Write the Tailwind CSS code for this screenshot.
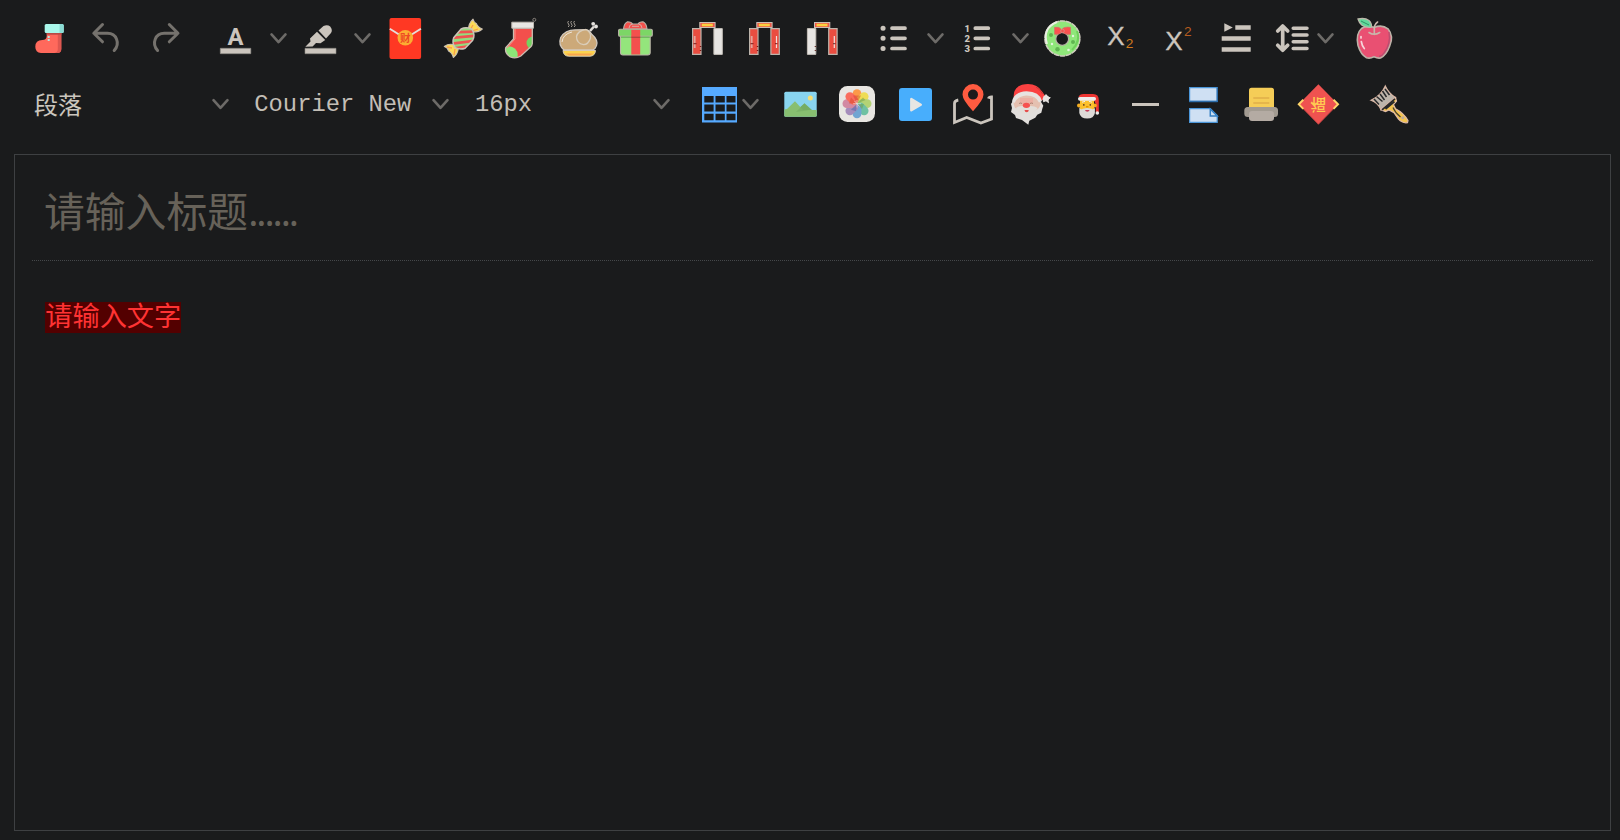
<!DOCTYPE html>
<html lang="zh">
<head>
<meta charset="utf-8">
<title>Editor</title>
<script src="https://cdn.jsdelivr.net/npm/@tailwindcss/browser@4"></script>
</head>
<body class="w-[1620px] h-[840px] overflow-hidden bg-[#1a1b1c] text-[#cbc6be] flex flex-col font-['Noto_Sans_CJK_SC',sans-serif]">
<svg class="hidden"><defs>
<path id="chev" d="M-7 -4.1 0 3.6 7 -4.1" fill="none" stroke="#6d6b68" stroke-width="2.6" stroke-linecap="round" stroke-linejoin="round"/>
<g id="pillar"><path d="M.4.4h8.4v25.8H.4z" fill="#ea4d40" stroke="#bcb4ab" stroke-width="1.2"/></g>
<g id="blank"><path d="M.4.4h8.4v25.8H.4z" fill="#e7e5e2" stroke="#c5c0b9" stroke-width="1"/></g>
<g id="plaque"><rect x=".5" y=".5" width="15.3" height="5" fill="#ed5749" stroke="#c9bfb4"/><path d="M2.500 1.700h11v2.600h-11z" fill="#fad13f"/></g>
</defs></svg>

<!-- toolbar, first row -->
<div class="flex h-[64px] mt-[6px] pl-[20px] shrink-0">
<svg class="w-[58px] h-[64px] shrink-0" viewBox="20 6 58 64"><path d="M46.7 32h14.6v17q0 4-4 4H41q-5.700-.3-5.700-6.200 0-6.800 7-6.800 4.400 0 4.400-4z" fill="#ff695c"/><path d="M57.800 33h3.500v16q0 4-4 4h-3q3.500-.5 3.500-4z" fill="#de5750"/><path d="M46.700 33h14.600v1.700H46.700z" fill="#b94a45"/><rect x="44.700" y="24" width="19" height="9" rx="1.500" fill="#a9f7ea"/><path d="M59.500 24h2.700q1.500 0 1.500 1.500v6q0 1.500-1.500 1.500h-2.700z" fill="#8bdcd4"/><path d="M47.700 36h2v2h-2zM47.700 39h2v2h-2z" fill="#b7e9e2"/></svg>
<svg class="w-[58px] h-[64px] shrink-0" viewBox="78 6 58 64" fill="none" stroke="#75726d" stroke-width="3" stroke-linecap="round" stroke-linejoin="round"><path d="M102.500 24.500 93.800 33.300 102.500 41.800M94 33.300h13.500c9 0 13 10 6.700 17.200"/></svg>
<svg class="w-[58px] h-[64px] shrink-0" viewBox="136 6 58 64" fill="none" stroke="#75726d" stroke-width="3" stroke-linecap="round" stroke-linejoin="round"><path d="M169.300 24.500 178 33.300 169.300 41.800M177.800 33.300h-13.500c-9 0-13 10-6.700 17.200"/></svg>
<svg class="w-[54px] h-[64px] shrink-0 ml-[14px]" viewBox="208 6 54 64" fill="#cbc5bd"><text x="227.500" y="45.200" font-size="24" font-weight="700" textLength="16" lengthAdjust="spacingAndGlyphs" font-family="Roboto,sans-serif">A</text><path d="M220.300 48.300h30.500v5.400h-30.500z" stroke="#918d88" stroke-width=".6"/></svg>
<svg class="w-[30px] h-[64px] shrink-0" viewBox="262 6 30 64"><use href="#chev" x="278.500" y="38.500"/></svg>
<svg class="w-[54px] h-[64px] shrink-0" viewBox="292 6 54 64" fill="#cbc5bd"><path d="M305.300 46.700l5.200-5.200-.5-3 7-6.800 8.200 8.200-4.700 3.400-4.500-.3-3.400 3.400z"/><path d="M318.500 30.500l5-4.600q4-1.700 6.700.6 2.800 3.500.8 6.500l-5 5.500z"/><path d="M305 48.300h31v5.400h-31z" stroke="#918d88" stroke-width=".6"/></svg>
<svg class="w-[30px] h-[64px] shrink-0" viewBox="346 6 30 64"><use href="#chev" x="362.500" y="38.500"/></svg>
<svg class="w-[58px] h-[64px] shrink-0" viewBox="376 6 58 64"><rect x="389.500" y="18" width="31.600" height="41" rx="2" fill="#ff3823"/><path d="M389.800 28.700 399 34.500M420.900 28.700 411.700 34.500" stroke="#e6ded9" stroke-width="1.900"/><circle cx="405.300" cy="37.700" r="7.800" fill="#fcad32"/><text x="405.300" y="41.500" font-size="10.500" font-weight="700" text-anchor="middle" fill="#ee4a24">财</text></svg>
<svg class="w-[58px] h-[64px] shrink-0" viewBox="434 6 58 64"><g stroke="#cbc0b2" stroke-width="1.100" stroke-linejoin="round"><path d="M468.500 29.500q0-6 4.500-10.300 1 3.500 3.300 4.300 1.200 3.500 6 5.500-4 3.500-10.500 3z" fill="#fcda57"/><path d="M456 45.500q-6.500-3-11.700 1 3.500 1 4.200 4.500 3.700 1.700 4.800 6.500 4.500-3.500 5-9z" fill="#fcda57"/></g><path d="M470 30l3-5M472 31l6-2M452 48l-5-1M455 49l-1 6" stroke="#f69e4d" stroke-width="1.300"/><clipPath id="cd"><path d="M461 29q5-2.500 11 .2 3.500 6 .7 11l-7.500 8q-5 2-10-.5-3.500-5-1.500-10z"/></clipPath><g clip-path="url(#cd)"><path d="M450 24h26v26h-26z" fill="#93dd7d"/><path d="M450 32.500l28-1M450 38l28-2.500M450 43.800l28-3.500M450 49l28-4" stroke="#ef5350" stroke-width="2.800"/></g><path d="M461 29q5-2.500 11 .2 3.500 6 .7 11l-7.500 8q-5 2-10-.5-3.500-5-1.500-10z" fill="none" stroke="#ccc3b9" stroke-width="1.500"/></svg>
<svg class="w-[58px] h-[64px] shrink-0" viewBox="492 6 58 64"><circle cx="534.300" cy="19.800" r="1.500" fill="none" stroke="#928b84" stroke-width=".9"/><clipPath id="sk"><path d="M513.500 28h18.800v15.500q-.2 2-1.500 3.300l-10 9.200q-5 3-10.500 1-6-4-4.500-9.500l7.700-8.500z"/></clipPath><g clip-path="url(#sk)"><path d="M500 25h40v40h-40z" fill="#f34f4c"/><circle cx="509" cy="55" r="8.700" fill="#8ce778"/><circle cx="533" cy="43" r="6.500" fill="#74d260"/><path d="M515 28v11l-8 9" stroke="#ff8b82" stroke-width="1" fill="none"/></g><path d="M513.500 28h18.800v15.500q-.2 2-1.500 3.300l-10 9.200q-5 3-10.500 1-6-4-4.500-9.500l7.700-8.500z" fill="none" stroke="#c9bdb1" stroke-width="1.300"/><path d="M511.800 22.200h21.700v6h-21.700z" fill="#e8e6e3" stroke="#bcb6ae"/></svg>
<svg class="w-[57px] h-[64px] shrink-0" viewBox="550 6 57 64"><path d="M568.500 21q-1.500 1.500 0 3t-.3 3M571.500 21q-1.500 1.500 0 3t-.3 3M574.500 21q-1.500 1.500 0 3t-.3 3" fill="none" stroke="#a29b93"/><path d="M590 31l4-4.500" stroke="#dedad5" stroke-width="2.600"/><circle cx="593.200" cy="23.800" r="1.900" fill="#e5e2de"/><circle cx="596" cy="26.500" r="1.900" fill="#e5e2de"/><path d="M564 50q-6-5-3.300-12.500 4.500-8 15.300-7.700l10-.2q3.500.5 5.500 4.500 7 6 5 11.500-1 3-3.500 4.400z" fill="#cca979" stroke="#d1c9bf" stroke-width="1.300"/><path d="M562 42q1-8 10-10" stroke="#eee5d9" stroke-width="1" fill="none"/><path d="M586 29.500q5.500 3 4.500 8.500-2 6.500-7 6.700-7-1.500-7-8 1-6 9.500-7.200" fill="#cca979" stroke="#dacdb9" stroke-width="1.300"/><path d="M563 50.500h32.500q-.5 5.500-5.500 5.700h-21.500q-5-.2-5.500-5.700z" fill="#fbd34f" stroke="#d8cbb9"/><path d="M566 53.500h27l-3 2h-21z" fill="#f9a650"/></svg>
<svg class="w-[58px] h-[64px] shrink-0" viewBox="607 6 58 64"><g stroke="#b9b3a7" stroke-width="1.100"><path d="M623.500 29q.5-5.500 4-7.200 4 0 5 2.200h5.500q1-2.200 5-2.200 3.500 1.700 4 7.200z" fill="#f3504c"/><rect x="620.500" y="35" width="29.700" height="20" rx="2.500" fill="#94e57c"/><rect x="618.600" y="29.300" width="33.700" height="7" rx="1.300" fill="#7cd666"/></g><path d="M621 37.200h28.800" stroke="#68b65a" stroke-width="1.300"/><path d="M631.300 29.900h8.900v24.600h-8.900z" fill="#f4504d"/><path d="M631.300 37.300h8.900" stroke="#b6433f" stroke-width="1.300"/><path d="M629 28q.5-4 3.500-4M642 28q-.5-4-3.500-4M632 26.300h7" fill="none" stroke="#d6b7ae" stroke-width=".9"/></svg>
<svg class="w-[58px] h-[64px] shrink-0 ml-[13px]" viewBox="678 6 58 64"><use href="#pillar" x="692.200" y="28.200"/><use href="#blank" x="713.500" y="28.200"/><use href="#plaque" x="699.300" y="22"/><path d="M694.700 36v12" stroke="#e5a49c" stroke-width="1.800"/><path d="M693.500 43.700h3M699.800 46.500h1.500M699.800 50.500h1.500" stroke="#7b1b18" stroke-width="1"/></svg>
<svg class="w-[58px] h-[64px] shrink-0" viewBox="736 6 58 64"><use href="#pillar" x="749.200" y="28.200"/><use href="#pillar" x="770.500" y="28.200"/><use href="#plaque" x="756.300" y="22"/><path d="M751.700 36v12" stroke="#e5a49c" stroke-width="1.800"/><path d="M776.500 36v12" stroke="#f1dfdc" stroke-width="1.200"/><path d="M750.500 43.700h3M756.800 46.500h1.500M756.800 50.500h1.500M775 43.700h2.500" stroke="#7b1b18" stroke-width="1"/></svg>
<svg class="w-[58px] h-[64px] shrink-0" viewBox="794 6 58 64"><use href="#blank" x="807" y="28.200"/><use href="#pillar" x="828.300" y="28.200"/><use href="#plaque" x="814" y="22"/><path d="M834.300 36v12" stroke="#f1dfdc" stroke-width="1.200"/><path d="M814.700 46.500h1.500M814.700 50.500h1.500M833 43.700h2.500" stroke="#64302c" stroke-width="1"/></svg>
<svg class="w-[54px] h-[64px] shrink-0 ml-[14px]" viewBox="866 6 54 64"><path d="M883 28.200h.1M883 38.300h.1M883 48.500h.1" stroke="#cbc5bd" stroke-width="5" stroke-linecap="round"/><path d="M892 28.200h13M892 38.300h13M892 48.500h13" stroke="#cbc5bd" stroke-width="3.700" stroke-linecap="round"/></svg>
<svg class="w-[30px] h-[64px] shrink-0" viewBox="920 6 30 64"><use href="#chev" x="935.500" y="38.500"/></svg>
<svg class="w-[56px] h-[64px] shrink-0" viewBox="950 6 56 64"><g fill="#cbc5bd" font-family="Roboto,sans-serif" font-weight="900" font-size="9.500" text-anchor="middle"><text x="967.200" y="31.700">1</text><text x="967.200" y="41.900">2</text><text x="967.200" y="52">3</text></g><path d="M975.300 28.200h13M975.300 38.300h13M975.300 48.500h13" stroke="#cbc5bd" stroke-width="3.700" stroke-linecap="round"/></svg>
<svg class="w-[28px] h-[64px] shrink-0" viewBox="1006 6 28 64"><use href="#chev" x="1020.500" y="38.500"/></svg>
<svg class="w-[58px] h-[64px] shrink-0" viewBox="1034 6 58 64"><circle cx="1062.400" cy="38.400" r="11.900" fill="none" stroke="#8fe77a" stroke-width="11.500"/><circle cx="1062.400" cy="38.400" r="17.500" fill="none" stroke="#d1ccc0" stroke-width="1.500" stroke-dasharray="5.500 .6"/><path d="M1047 44q-5-16 10-22" fill="none" stroke="#e9eee1" stroke-width="2"/><path d="M1077 31q4 10-5 19" fill="none" stroke="#6fd05b" stroke-width="2"/><circle cx="1062.200" cy="38.900" r="6.400" fill="#1a1b1c" stroke="#b8b3a7" stroke-width="1.200"/><g fill="#60b551"><circle cx="1051" cy="35" r="2"/><circle cx="1057.500" cy="49.300" r="2.200"/><circle cx="1073" cy="42" r="2"/></g><g fill="#e3f4dc"><circle cx="1052" cy="44" r="1.200"/><circle cx="1068.500" cy="50" r="1.300"/><circle cx="1073" cy="36" r="1.200"/></g><path d="M1054.500 27.300q4.500-1 7 2.200 3-3.200 9-2.200v7q-5.500.5-8.500-2-2.500 2.500-7.500 2z" fill="#fa524f" stroke="#cf746a" stroke-width=".7"/><circle cx="1062.500" cy="31" r="1.800" fill="#f3534e" stroke="#d39e91" stroke-width=".7"/></svg>
<svg class="w-[58px] h-[64px] shrink-0" viewBox="1092 6 58 64"><text x="1107.300" y="45.300" font-family="Liberation Sans,sans-serif" font-size="25" fill="#cbc5bd" stroke="#cbc5bd" stroke-width=".3" textLength="17.400" lengthAdjust="spacingAndGlyphs">X</text><text x="1125.700" y="48" font-family="Liberation Sans,sans-serif" font-size="13.700" fill="#d1791e">2</text></svg>
<svg class="w-[58px] h-[64px] shrink-0" viewBox="1150 6 58 64"><text x="1165.300" y="50.300" font-family="Liberation Sans,sans-serif" font-size="25" fill="#cbc5bd" stroke="#cbc5bd" stroke-width=".3" textLength="17.400" lengthAdjust="spacingAndGlyphs">X</text><text x="1183.900" y="36" font-family="Liberation Sans,sans-serif" font-size="13.700" fill="#b65c1f">2</text></svg>
<svg class="w-[58px] h-[64px] shrink-0" viewBox="1208 6 58 64" fill="#cbc5bd"><path d="M1224.300 23.200v8.600l8.500-4.300zM1235.300 25.200h15.400v4.600h-15.400zM1221.700 36.200h29v4.600h-29zM1221.700 47.200h29v4.600h-29z"/></svg>
<svg class="w-[46px] h-[64px] shrink-0" viewBox="1266 6 46 64" fill="none" stroke="#cbc5bd" stroke-linecap="round" stroke-linejoin="round"><path d="M1277.700 31l5-5 5 5M1277.700 45.200l5 5 5-5M1282.700 27v22" stroke-width="3.700"/><path d="M1293.200 28.200h13.800M1293.200 34.900h13.800M1293.200 41.700h13.800M1293.200 48.500h13.800" stroke-width="3.500"/></svg>
<svg class="w-[28px] h-[64px] shrink-0" viewBox="1312 6 28 64"><use href="#chev" x="1325.500" y="38.500"/></svg>
<svg class="w-[58px] h-[64px] shrink-0 ml-[5px]" viewBox="1345 6 58 64"><path d="M1374 27.500q8-3.300 14 1.300 6 7.500 1.700 17.200-3.500 9.500-9.200 12-3 .5-6.500-1.200-4 2-7.500.9-5.700-3-8.500-12.200-2.500-11.500 3.500-17 5.500-4 12.500-1z" fill="#e95072" stroke="#bcb2a7" stroke-width="1.600"/><path d="M1389 32q2 12-5 21-2 3-5 3.500" fill="none" stroke="#b64f70" stroke-width="1.300"/><path d="M1361.300 41.500q.7 4.500 3 7M1361 36.500v1.500" stroke="#f6d6db" stroke-width="1.700" fill="none" stroke-linecap="round"/><path d="M1369 32.500q5 3.500 10.700 0M1374.300 34.500v-8q1-3 3.300-4.500" fill="none" stroke="#c9b6aa" stroke-width="1.600" stroke-linecap="round"/><path d="M1358 19q7-1.500 11 1.500 2.800 2.500 2.500 6.700-5.500.7-9.500-2-3-2.500-4-6.200z" fill="#61da9b" stroke="#bcb8aa" stroke-width="1.300"/><path d="M1361 21l8 4" stroke="#2a8b62" stroke-width=".9"/></svg>
</div>

<!-- toolbar, second row -->
<div class="flex h-[64px] mt-[2px] shrink-0">
<div class="flex w-[208px] pl-[34px] h-[64px] items-center text-[24px] leading-[64px]">段落</div>
<svg class="w-[28px] h-[64px] shrink-0" viewBox="208 72 28 64"><use href="#chev" x="220.500" y="104.300"/></svg>
<svg class="w-[192px] h-[64px] shrink-0" viewBox="236 72 192 64"><text x="254.300" y="111" font-size="23.800" font-family="Courier New,Liberation Mono,monospace" fill="#c3beb6">Courier New</text></svg>
<svg class="w-[28px] h-[64px] shrink-0" viewBox="428 72 28 64"><use href="#chev" x="440.500" y="104.300"/></svg>
<svg class="w-[192px] h-[64px] shrink-0" viewBox="456 72 192 64"><text x="475" y="111" font-size="23.800" font-family="Courier New,Liberation Mono,monospace" fill="#c3beb6">16px</text></svg>
<svg class="w-[30px] h-[64px] shrink-0" viewBox="648 72 30 64"><use href="#chev" x="661.500" y="104.300"/></svg>
<svg class="w-[60px] h-[64px] shrink-0 ml-[12px]" viewBox="690 72 60 64" overflow="visible"><path d="M702 87h35v35.500h-35z" fill="#56aaff"/><path d="M704.300 96h9.300v6.500h-9.300zM715.500 96h9.300v6.500h-9.300zM726.500 96h9v6.500h-9zM704.300 104.500h9.300v7h-9.300zM715.500 104.500h9.300v7h-9.300zM726.500 104.500h9v7h-9zM704.300 113.800h9.300v6.500h-9.300zM715.500 113.800h9.300v6.500h-9.300zM726.500 113.800h9v6.500h-9z" fill="#1a1b1c"/><use href="#chev" x="750.500" y="104.300"/></svg>
<svg class="w-[58px] h-[64px] shrink-0 ml-[21px]" viewBox="771 72 58 64"><clipPath id="pic"><rect x="784.300" y="91.800" width="32.400" height="25" rx="1.500"/></clipPath><g clip-path="url(#pic)"><path d="M784 91h33v27h-33z" fill="#88d4ef"/><path d="M797 110l7.500-6.700L812 110v3h-15z" fill="#76ae67"/><path d="M784 109.500l3-.5 8-7.700 8 8.700h14v8h-33z" fill="#88bf70"/><path d="M796 112l8.500-8.500L810 110z" fill="#75ab63" opacity=".6"/></g><circle cx="810.300" cy="98" r="2.500" fill="#f7df73"/></svg>
<svg class="w-[58px] h-[64px] shrink-0" viewBox="829 72 58 64"><rect x="839" y="86" width="36" height="36" rx="8.500" fill="#e8e6e2"/><g opacity=".9"><rect x="852.600" y="89.200" width="8.800" height="14.300" rx="4.400" fill="#ff9138"/><g transform="rotate(45 857 103.700)"><rect x="852.600" y="89.200" width="8.800" height="14.300" rx="4.400" fill="#efdc45"/></g><g transform="rotate(90 857 103.700)"><rect x="852.600" y="89.200" width="8.800" height="14.300" rx="4.400" fill="#aed16a"/></g><g transform="rotate(135 857 103.700)"><rect x="852.600" y="89.200" width="8.800" height="14.300" rx="4.400" fill="#62bd9c"/></g><g transform="rotate(180 857 103.700)"><rect x="852.600" y="89.200" width="8.800" height="14.300" rx="4.400" fill="#659ed1"/></g><g transform="rotate(225 857 103.700)"><rect x="852.600" y="89.200" width="8.800" height="14.300" rx="4.400" fill="#9e83b7"/></g><g transform="rotate(270 857 103.700)"><rect x="852.600" y="89.200" width="8.800" height="14.300" rx="4.400" fill="#d0809d"/></g><g transform="rotate(315 857 103.700)"><rect x="852.600" y="89.200" width="8.800" height="14.300" rx="4.400" fill="#fb604f"/></g></g><path d="M853 95.500l4 8 4-8M849 103.500h8l-6-6" fill="#d8452c" opacity=".5"/><path d="M863 97.500l-6 6 8.500-3.500M857 103.700l7 .3-2 5z" fill="#6d9b45" opacity=".5"/><path d="M857 103.700l-6 6 5 1.500z" fill="#4e5fa5" opacity=".5"/><path d="M857 100v7.500M853.200 103.700h7.600M854.500 101l5 5.500" stroke="#eee" stroke-width=".6"/></svg>
<svg class="w-[57px] h-[64px] shrink-0" viewBox="887 72 57 64"><rect x="899" y="88" width="33" height="33" rx="3" fill="#48aefc"/><path d="M911.300 99v11.300l9.500-5.600z" fill="#e8e6e3" stroke="#e8e6e3" stroke-width="2.400" stroke-linejoin="round"/></svg>
<svg class="w-[58px] h-[64px] shrink-0" viewBox="944 72 58 64"><path d="M958.300 100q-3.800.7-3.800 3.500v19l12.200-5 14.200 5.500 10.600-4V97q-2.500 0-3 1.700" fill="none" stroke="#cbc5bd" stroke-width="2.800"/><path fill-rule="evenodd" d="M973 84a10.600 10.600 0 0 1 10.500 10.600q0 5.400-10.500 16.700-10.500-11.300-10.500-16.700A10.600 10.600 0 0 1 973 84zm0 5.600a5 5 0 1 0 0 10 5 5 0 0 0 0-10z" fill="#ff5b40"/></svg>
<svg class="w-[58px] h-[64px] shrink-0" viewBox="1002 72 58 64"><path d="M1014 100q-2-12 8-15.200 14-3 20.500 7.200l4 6-6 3z" fill="#fb4141"/><path d="M1036 87q4 2 6.500 7" stroke="#c93a3a" fill="none"/><path d="M1014 99l-3 5 1 4-1 4 4 3 1 3 6 2 6.300 4.700 1-4 6-3 2-3 4-2 1-4 1-3-3-5-4-2z" fill="#e2dfdc"/><path d="M1013.500 103q1-8 13-8.500 12 .5 14 8.500 0 6-6.500 8h-14q-6-2-6.500-8z" fill="#e5c0b0"/><path d="M1020 98h13v6h-13z" fill="#edaaa0" opacity=".8"/><path d="M1012 101.500q2-9.500 14.500-10.200 13 .3 15.500 9.700l-3 1.500q-3-7-12.500-7-9 .5-12 7.500z" fill="#e7e4e1"/><path d="M1016 108q3-3 10.500-1.500 7-1.500 11 1.500-2 6-11 5-9 1-10.500-5z" fill="#e3ded9"/><ellipse cx="1026.400" cy="105.300" rx="3.600" ry="2.600" fill="#f65150"/><path d="M1024.500 110h4.300q-.3 2.300-2.100 2.300-1.900 0-2.200-2.300z" fill="#e54d4c"/><path d="M1019 103.500q1.500-1 3 0M1030 103.500q1.500-1 3 0" stroke="#9c7b6b" stroke-width=".8" fill="none"/><circle cx="1046" cy="98.200" r="3" fill="#e7e4e1"/><path d="M1043 98.500l2-1 1-3 1.300 2.500 3 .7-2.500 2 .7 3-2.500-2-2.500 1z" fill="#e7e4e1" stroke="#e7e4e1" stroke-linejoin="round"/></svg>
<svg class="w-[57px] h-[64px] shrink-0" viewBox="1060 72 57 64"><path d="M1078.500 97q1-3 5-3h9.500q5.800 0 5.800 6v12h-3v-8l-3-6z" fill="#ee3532"/><circle cx="1079" cy="105.500" r="2" fill="#f5ac1e"/><circle cx="1094.800" cy="105.500" r="2" fill="#f5ac1e"/><path d="M1080 98h14v12h-14z" fill="#fbc02d"/><path d="M1079.300 107q1 3.500 3.500 1.800l4.400-.8 4.400.8q2.500 1.700 3.300-1.800v6q-1 5.500-7.700 5.500t-7.900-5.500z" fill="#dedbd8"/><rect x="1078" y="97" width="18" height="3.700" rx="1.800" fill="#eeeceb"/><path d="M1083.800 104v1.700M1090.300 104v1.700" stroke="#644324" stroke-width="1.400"/><path d="M1082 102.200l3-.8M1089 101.400l3 .8" stroke="#eee"/><path d="M1085 110h4.600q-.5 1.800-2.300 1.800t-2.300-1.800z" fill="#c63c5a"/><path d="M1086 106.700h2.500" stroke="#e59600" stroke-width="1.500"/><circle cx="1097.300" cy="113" r="1.800" fill="#eeeceb"/></svg>
<svg class="w-[58px] h-[64px] shrink-0" viewBox="1117 72 58 64"><path d="M1132 103h27v3h-27z" fill="#cbc5bd"/></svg>
<svg class="w-[58px] h-[64px] shrink-0" viewBox="1175 72 58 64"><path d="M1189.600 87.600h27.600v13.800h-27.600zM1189.600 108.600h20.700l6.900 7v6.800h-27.600z" fill="#cfe0f3" stroke="#4b96d9" stroke-width="1.200"/><path d="M1189.200 101.500h28.400M1217.300 87.500v14.500" stroke="#2c6daa" stroke-width="1.300"/><path d="M1210.300 109v7h6.900z" fill="#cfe0f3" stroke="#347fc4" stroke-width="1.500"/></svg>
<svg class="w-[57px] h-[64px] shrink-0" viewBox="1233 72 57 64"><rect x="1249" y="87.700" width="25" height="22" rx="2.500" fill="#f5cd57"/><path d="M1253.300 98h16M1253.300 103h16" stroke="#e0ae4a" stroke-width="1.500"/><rect x="1244.300" y="107" width="33.700" height="10" rx="3.500" fill="#a29b91"/><rect x="1249" y="111" width="25" height="10" rx="3" fill="#b4aba3"/></svg>
<svg class="w-[57px] h-[64px] shrink-0" viewBox="1290 72 57 64"><path d="M1318.400 84.300l19.600 20-19.600 20-19.600-20z" fill="#ef5250"/><path d="M1298.800 104.300l19.600 20 19.600-20" fill="none" stroke="#ca4444" stroke-width=".8"/><path d="M1303.300 99.700l-4.500 4.600 4.500 4.600M1333.500 99.700l4.500 4.600-4.500 4.600" fill="none" stroke="#ffd469" stroke-width="2"/><g transform="matrix(1 0 0 -1 0 208.600)"><text x="1318.300" y="110" text-anchor="middle" font-size="15.500" font-weight="500" fill="#ffcb52">福</text></g></svg>
<svg class="w-[66px] h-[64px] shrink-0 ml-[7px]" viewBox="1354 72 66 64"><path d="M1385.300 86q3 7 10.200 11.500L1381 109.800q-3-7-10-9.500 10-4.500 14.300-14.300z" fill="#bdb5ab" stroke="#d9b6a4" stroke-width="1.200"/><path d="M1374 99l5 5.500M1376.500 96.500l6 5M1380 94l4.500 6M1382.500 91l4 6M1385 89l4.500 6" stroke="#28292a" stroke-width="1.500"/><path d="M1381 109.800l14.500-12.300 1 3.700-3 3.500 2 4q8 4 12.500 11.800l-.5 2.200q-5 .8-9-3.500l-4.500-6.500-5-2.700-3.500 1.500z" fill="#f4c54f" stroke="#dfbaa8" stroke-width="1.200"/><path d="M1382 109.800l13-11M1385.500 109l9-7.300" stroke="#28292a" stroke-width="1.700"/><path d="M1393 107.500q2 5 7.500 9.500" stroke="#49402f" stroke-width="1.200" fill="none"/><circle cx="1402.800" cy="117.700" r="1.500" fill="#bdaaa0"/></svg>
</div>

<!-- editing area -->
<main class="mt-[18px] ml-[14px] w-[1597px] h-[677px] border border-[#3e4042] shrink-0 pl-[17px] pr-[17px]">
<div class="h-[106px] border-b border-dotted border-[#45484a] flex items-center pl-[12px] pt-[4px] text-[40.800px] text-[#676259] leading-[60px]">请输入标题<span class="font-['Open_Sans',sans-serif] tracking-[-2.600px]">......</span></div>
<div class="pl-[13.300px] pt-[41px]"><div class="inline-block h-[31px] bg-[#530000] text-[#ff3333] text-[27.200px] leading-[25px] whitespace-nowrap">请输入文字</div></div>
</main>
</body>
</html>
